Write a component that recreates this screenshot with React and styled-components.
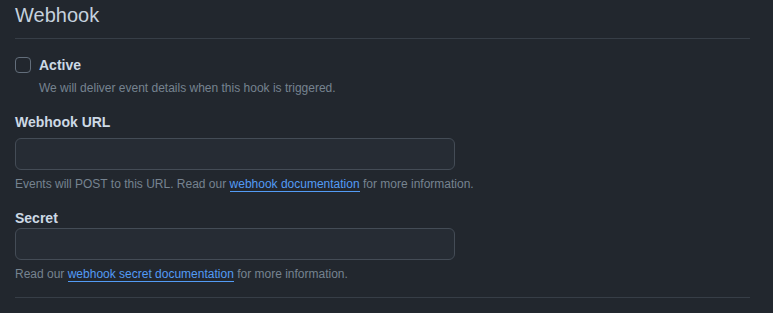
import styled, { createGlobalStyle } from 'styled-components';

const GlobalStyle = createGlobalStyle`
  html, body {
    margin: 0;
    padding: 0;
    background: #22272e;
  }

  body {
    font-family: "Liberation Sans", Arial, sans-serif;
    color: #adbac7;
  }
`;

const Wrapper = styled.section`
  padding: 0 23px 0 15px;
  width: 100%;
  box-sizing: border-box;
`;

const Heading = styled.h2`
  margin: 0;
  padding-bottom: 8px;
  border-bottom: 1px solid #373e47;
  font-size: 20px;
  font-weight: 400;
  line-height: 30px;
  color: #c5d1de;
`;

const CheckRow = styled.label`
  display: flex;
  align-items: flex-start;
  gap: 8px;
  margin-top: 16px;
  cursor: pointer;
`;

const Box = styled.span`
  flex: none;
  width: 16px;
  height: 16px;
  margin-top: 2px;
  box-sizing: border-box;
  border: 1px solid #636e7b;
  border-radius: 4px;
`;

const CheckText = styled.div`
  display: flex;
  flex-direction: column;
`;

const Label = styled.div`
  font-size: 14px;
  font-weight: 700;
  line-height: 20px;
  color: #cdd9e5;
`;

const Note = styled.p`
  margin: ${({ $top }) => $top || 4}px 0 0;
  font-size: 12px;
  line-height: 18px;
  color: #768390;
`;

const Link = styled.a`
  color: #539bf5;
  text-decoration: none;
  border-bottom: 1px solid #539bf5;
`;

const Group = styled.div`
  margin-top: 15px;
`;

const Input = styled.input`
  display: block;
  width: 440px;
  height: 32px;
  margin-top: ${({ $gap }) => $gap}px;
  box-sizing: border-box;
  padding: 5px 12px;
  border: 1px solid #444c56;
  border-radius: 6px;
  background: #262c34;
  color: #adbac7;
  font: inherit;
  font-size: 14px;
  outline: none;
`;

const Divider = styled.hr`
  margin: 14px 0 0;
  border: 0;
  border-top: 1px solid #373e47;
`;

const App = () => (
  <>
    <GlobalStyle />
    <Wrapper>
      <Heading>Webhook</Heading>

      <CheckRow>
        <Box />
        <CheckText>
          <Label>Active</Label>
          <Note>We will deliver event details when this hook is triggered.</Note>
        </CheckText>
      </CheckRow>

      <Group>
        <Label>Webhook URL</Label>
        <Input type="text" $gap={6} />
        <Note $top={5}>
          Events will POST to this URL. Read our{' '}
          <Link href="#">webhook documentation</Link> for more information.
        </Note>
      </Group>

      <Group>
        <Label>Secret</Label>
        <Input type="text" $gap={0} />
        <Note $top={5}>
          Read our <Link href="#">webhook secret documentation</Link> for more
          information.
        </Note>
      </Group>

      <Divider />
    </Wrapper>
  </>
);

export default App;
